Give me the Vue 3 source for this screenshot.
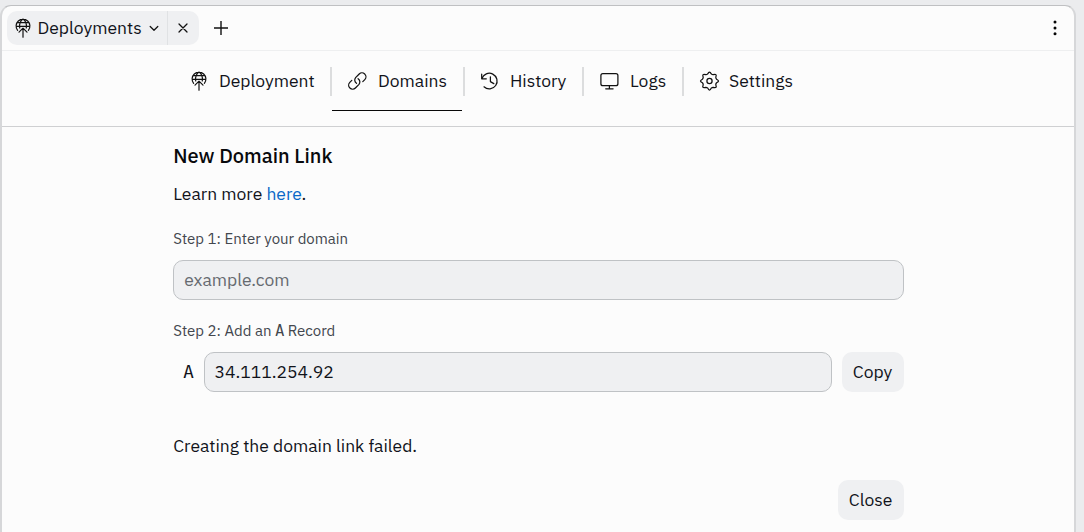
<script setup>
import { ref } from 'vue'

const tabs = [
  { id: 'deployment', label: 'Deployment', icon: 'globe' },
  { id: 'domains', label: 'Domains', icon: 'link' },
  { id: 'history', label: 'History', icon: 'history' },
  { id: 'logs', label: 'Logs', icon: 'monitor' },
  { id: 'settings', label: 'Settings', icon: 'gear' },
]
const active = ref('domains')
const domain = ref('')
const address = '34.111.254.92'
</script>

<template>
  <div class="window">
    <header class="bar">
      <div class="chip">
        <button class="chip-main">
          <svg class="globe" width="16" height="20" viewBox="0 0 16 20">
            <path d="M2.6 12.3A6.9 6.9 0 1 1 13.4 12.3M2 4.6h12M1.1 8.3h13.8M4.7 10C4.2 6.6 5.2 3 8 1.1c2.8 1.9 3.8 5.5 3.3 8.9M8 19.2v-9M4 14.2l4-4 4 4" />
          </svg>
          <span class="chip-label">Deployments</span>
          <svg width="8" height="5" viewBox="0 0 8 5"><path d="m.2.5 3.8 3.8L7.8.5" /></svg>
        </button>
        <button class="chip-close">
          <svg width="8" height="8" viewBox="0 0 8 8"><path d="m0 0 8 8m0-8L0 8" /></svg>
        </button>
      </div>
      <button class="add">
        <svg width="14" height="14" viewBox="0 0 14 14"><path d="M7 0v14M0 7h14" /></svg>
      </button>
      <button class="more">
        <svg width="4" height="16" viewBox="0 0 4 16">
          <g class="solid"><circle cx="2" cy="2" r="1.5" /><circle cx="2" cy="8" r="1.5" /><circle cx="2" cy="13.8" r="1.5" /></g>
        </svg>
      </button>
    </header>

    <nav class="nav">
      <button v-for="t in tabs" :key="t.id" :class="['tab', t.id, { active: active === t.id }]" @click="active = t.id">
        <svg v-if="t.icon === 'globe'" class="globe" width="16" height="20" viewBox="0 0 16 20">
          <path d="M2.6 12.3A6.9 6.9 0 1 1 13.4 12.3M2 4.6h12M1.1 8.3h13.8M4.7 10C4.2 6.6 5.2 3 8 1.1c2.8 1.9 3.8 5.5 3.3 8.9M8 19.2v-9M4 14.2l4-4 4 4" />
        </svg>
        <svg v-else-if="t.icon === 'link'" width="20" height="20" viewBox="-0.5 0 20 20">
          <path d="M9 12.3a3.9 3.9 0 0 1-.9-5.7l3.6-3.6a3.9 3.9 0 0 1 5.5 0l.1.1a3.9 3.9 0 0 1 0 5.5l-2 2M10.6 7.7a3.9 3.9 0 0 1 .9 5.7l-3.6 3.6a3.9 3.9 0 0 1-5.5 0l-.1-.1a3.9 3.9 0 0 1 0-5.5l2-2" />
        </svg>
        <svg v-else-if="t.icon === 'history'" width="20" height="20" viewBox="0 0 20 20">
          <path d="M1.7 3.2v4.6h4.6M1.9 7.6A7.8 7.8 0 1 1 4 15.8M10.4 5.8v4.8l3.4 2" />
        </svg>
        <svg v-else-if="t.icon === 'monitor'" width="20" height="20" viewBox="-0.5 0 20 20">
          <rect x="1.4" y="2.5" width="17" height="12.2" rx="2" /><path d="M9.9 14.7v3M6.2 17.8h7.4" />
        </svg>
        <svg v-else width="20" height="20" viewBox="-0.5 0 20 20">
          <path d="M8.2 2.9Q10-.9 11.8 2.9Q12.5 3.6 13.7 3.7Q17.8 2.2 16.3 6.3Q16.3 7.4 17.1 8.2Q20.9 10 17.1 11.8Q16.3 12.6 16.3 13.7Q17.8 17.8 13.7 16.3Q12.5 16.4 11.8 17.1Q10 20.9 8.2 17.1Q7.4 16.3 6.3 16.3Q2.2 17.8 3.7 13.7Q3.7 12.6 2.9 11.8Q-.9 10 2.9 8.2Q3.7 7.4 3.7 6.3Q2.2 2.2 6.3 3.7Q7.5 3.6 8.2 2.9Z" /><circle cx="10" cy="10" r="2.6" />
        </svg>
        <span class="tab-label">{{ t.label }}</span>
      </button>
    </nav>

    <main class="content">
      <h1>New Domain Link</h1>
      <p class="learn">Learn more <a>here</a>.</p>
      <label class="step one">Step 1: Enter your domain</label>
      <input v-model="domain" class="field" placeholder="example.com" />
      <label class="step two">Step 2: Add an <span class="mono">A</span> Record</label>
      <div class="record">
        <span class="mono type">A</span>
        <input class="field address" :value="address" readonly />
        <button class="button copy">Copy</button>
      </div>
      <p class="error">Creating the domain link failed.</p>
      <button class="button close">Close</button>
    </main>
  </div>
</template>

<style>
html, body { margin: 0; height: 100%; background: #ebecee; overflow: hidden; }
#app { display: flow-root; }
</style>

<style scoped>
* { box-sizing: border-box; }
.window {
  width: 1076px; height: 527px; margin-top: 5px;
  border: solid #d6d7d9; border-width: 1px 2px 0; border-top-color: #bfc0c2;
  border-radius: 11px 11px 0 0; background: #fcfcfc; color: #11131a;
  font: 17.5px/24px "IBM Plex Sans", "Noto Sans", sans-serif;
}
button { border: 0; padding: 0; margin: 0; background: none; color: inherit; font: inherit; }
svg { display: block; flex: none; fill: none; stroke: #111; stroke-width: 1.25; stroke-linecap: round; stroke-linejoin: round; overflow: visible; }
.globe { stroke-width: 1.2; }
.solid { fill: #050505; stroke: none; }
.bar { height: 45px; border-bottom: 1px solid #eeeff0; display: flex; align-items: center; padding: 0 17px 0 5px; }
.chip { display: flex; width: 192px; height: 34px; border-radius: 10px; background: #eff0f2; }
.chip-main { width: 161px; display: flex; align-items: center; padding-left: 8px; border-right: 1px solid #e0e2e4; }
.chip-label { width: 104px; margin: 0 8px 0 6.5px; text-align: left; white-space: nowrap; }
.chip-close { width: 30px; display: grid; place-items: center; }
.add { margin-left: 15px; }
.add svg { stroke-linecap: butt; stroke-width: 1.4; }
.more { margin-left: auto; }
.nav { height: 76px; padding: 16px 0 0 173px; border-bottom: 1px solid #cfd0d2; display: flex; align-items: flex-start; }
.tab { position: relative; height: 29px; display: flex; align-items: center; padding: 0 0 1px 15px; border-right: 2px solid #dcddde; white-space: nowrap; }
.tab-label { margin-left: 11px; }
.deployment { width: 157px; padding-left: 16px; }
.domains { width: 133px; }
.history { width: 119px; }
.logs { width: 100px; }
.settings { border: 0; }
.deployment .tab-label { margin-left: 12px; }
.history .tab-label { margin-left: 10px; }
.settings .tab-label { margin-left: 10px; }
.active::after { content: ""; position: absolute; left: 0; right: 1px; top: 43px; height: 1px; background: #080808; }
.content { width: 730.4px; margin-left: 171.2px; display: flex; flex-direction: column; }
h1 { margin: 16px 0 0; font-size: 20px; line-height: 26px; font-weight: 500; color: #08090c; }
p { margin: 0; white-space: nowrap; }
.learn { margin-top: 13px; }
a { color: #0a68c7; }
.step { font-size: 15px; line-height: 20px; color: #43474e; white-space: nowrap; }
.one { margin-top: 23px; }
.two { margin-top: 21px; }
.field { width: 100%; height: 40px; margin: 11px 0 0; padding: 0 10px 2px; border: 1px solid #bfc2c5; border-radius: 10px; background: #eff0f2; color: #11131a; font: inherit; outline: 0; }
.field::placeholder { color: #666a70; opacity: 1; }
.mono { font-family: "DejaVu Sans Mono", monospace; line-height: 1; }
.record { display: flex; align-items: center; margin-top: 11px; }
.type { width: 30.4px; padding: 2px 0 0 10px; }
.address { width: 628px; margin: 0; }
.button { height: 40px; border-radius: 10px; background: #eff0f2; }
.copy { width: 62px; margin-left: 10px; }
.error { margin-top: 42px; }
.close { width: 66px; margin: 22px 0 0 auto; }
</style>
